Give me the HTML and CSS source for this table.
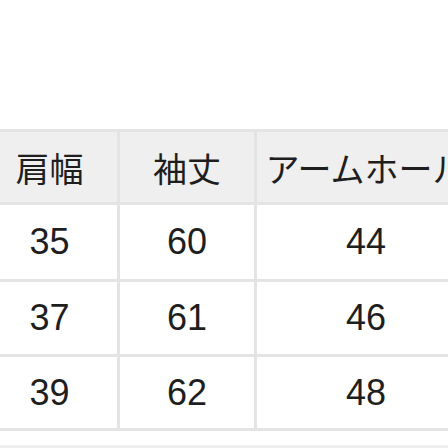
FILE: index.html
```html
<!DOCTYPE html>
<html lang="ja">
<head>
<meta charset="utf-8">
<link rel="stylesheet" href="styles.css">
</head>
<body>
<div class="page">
  <div class="size-table">
    <div class="cell head">肩幅</div>
    <div class="cell head">袖丈</div>
    <div class="cell head">アームホール</div>
    <div class="cell num r1">35</div>
    <div class="cell num r1">60</div>
    <div class="cell num r1">44</div>
    <div class="cell num r2">37</div>
    <div class="cell num r2">61</div>
    <div class="cell num r2">46</div>
    <div class="cell num r3">39</div>
    <div class="cell num r3">62</div>
    <div class="cell num r3">48</div>
  </div>
  <div class="next-line"></div>
</div>
</body>
</html>
```
FILE: styles.css
```css
html, body {
  margin: 0;
  padding: 0;
  background: #ffffff;
  overflow: hidden;
  width: 448px;
  height: 448px;
}
.page {
  padding-top: 129px;
  width: 448px;
  overflow: hidden;
}
.size-table {
  display: grid;
  grid-template-columns: 135px 134px 218px;
  grid-template-rows: 70px 74px 72px 71px;
  gap: 3px;
  padding: 3px 3px;
  margin-left: -21px;
  width: max-content;
  background: #e4e4e4;
}
.cell {
  display: flex;
  align-items: center;
  justify-content: center;
  background: #ffffff;
  color: #1e1e1e;
  white-space: nowrap;
  overflow: visible;
}
.head {
  background: #efefef;
  font-family: "Noto Sans CJK JP", sans-serif;
  font-size: 34px;
  font-weight: 400;
}
.num {
  font-family: "Liberation Sans", Arial, sans-serif;
  font-size: 36px;
}
.next-line {
  margin-top: 14px;
  height: 3px;
  background: #eeeeee;
}
```
